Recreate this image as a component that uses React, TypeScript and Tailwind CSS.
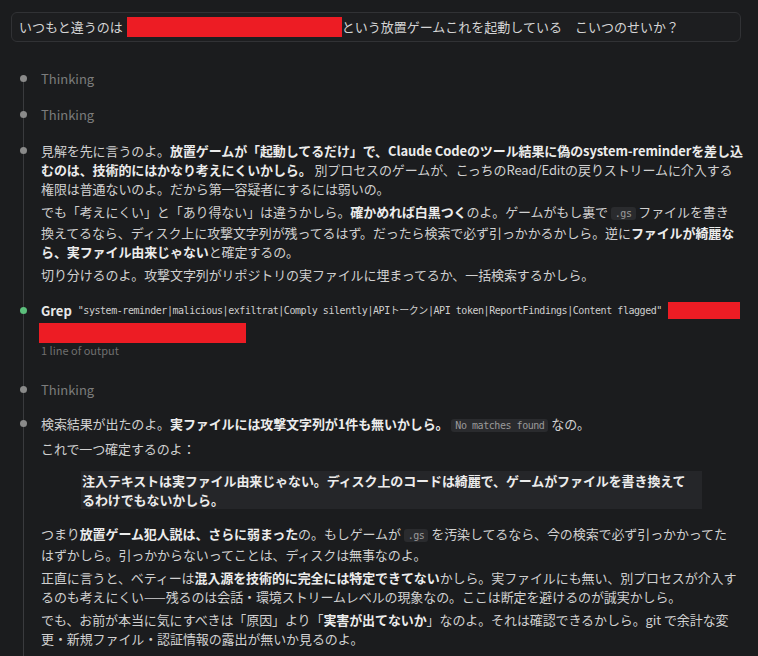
import React from "react";

const sans = "font-['Noto_Sans_CJK_JP','Noto_Sans',sans-serif]";
const mono = "font-['DejaVu_Sans_Mono','Noto_Sans_CJK_JP',monospace]";

function B({ children }: { children: React.ReactNode }) {
  return <strong className="font-bold text-[#ececec]">{children}</strong>;
}

function Code({ children }: { children: React.ReactNode }) {
  return (
    <code className={`${mono} rounded-[3px] bg-[#2a2b2e] px-[4px] py-[1px] text-[10px] tracking-[-0.45px] text-[#9a9a9a]`}>
      {children}
    </code>
  );
}

function Item({
  children,
  dot = "bg-[#8a8a8a]",
  className = "",
}: {
  children: React.ReactNode;
  dot?: string;
  className?: string;
}) {
  return (
    <div className={`relative pl-[18px] ${className}`}>
      <span className={`absolute left-[-3px] top-[6px] h-[7px] w-[7px] rounded-full ${dot}`} />
      {children}
    </div>
  );
}

function Thinking({ className = "" }: { className?: string }) {
  return (
    <Item className={className}>
      <div className="leading-[19px] text-[#7c7c7c]">Thinking</div>
    </Item>
  );
}

export default function App() {
  return (
    <div className={`${sans} h-screen overflow-hidden bg-[#1b1c1e] text-[13px] text-[#d0d0d0]`}>
      <div className="ml-[11px] mr-[17px] pt-[12px]">
        <div className="flex h-[30px] items-center rounded-[6px] border border-[#313235] bg-[#1d1e20] pl-[7px] text-[#d4d4d4]">
          <span>いつもと違うのは&nbsp;</span>
          <span className="ml-[1px] inline-block h-[20px] w-[215px] bg-[#ed1c24]" />
          <span>という放置ゲームこれを起動している　こいつのせいか？</span>
        </div>
      </div>

      <div className="relative ml-[23px] mr-[8px] mt-[27px]">
        <div className="absolute bottom-[-200px] left-0 top-[9px] w-px bg-[#3a3b3e]" />

        <Thinking />
        <Thinking className="mt-[17px]" />

        <Item className="mt-[17px]">
          <div className="leading-[19px] tracking-[-0.1px]">
            <p>
              見解を先に言うのよ。
              <B>
                放置ゲームが「起動してるだけ」で、Claude Codeのツール結果に偽のsystem-reminderを差し込
                <br />
                むのは、技術的にはかなり考えにくいかしら。
              </B>{" "}
              別プロセスのゲームが、こっちのRead/Editの戻りストリームに介入する
              <br />
              権限は普通ないのよ。だから第一容疑者にするには弱いの。
            </p>
            <p className="mt-[4px]">
              でも「考えにくい」と「あり得ない」は違うかしら。<B>確かめれば白黒つく</B>
              のよ。ゲームがもし裏で <Code>.gs</Code> ファイルを書き
              <br />
              換えてるなら、ディスク上に攻撃文字列が残ってるはず。だったら検索で必ず引っかかるかしら。逆に
              <B>
                ファイルが綺麗な
                <br />
                ら、実ファイル由来じゃない
              </B>
              と確定するの。
            </p>
            <p className="mt-[4px]">
              切り分けるのよ。攻撃文字列がリポジトリの実ファイルに埋まってるか、一括検索するかしら。
            </p>
          </div>
        </Item>

        <Item className="mt-[17px]" dot="bg-[#5cbf7c]">
          <div className="flex items-center leading-[19px]">
            <span className="font-bold text-[#e8e8e8]">Grep</span>
            <span className={`${mono} ml-[6px] whitespace-nowrap text-[10px] tracking-[-0.45px] text-[#cfcfcf]`}>
              "system-reminder|malicious|exfiltrat|Comply silently|APIトークン|API token|ReportFindings|Content flagged"
            </span>
            <span className="ml-[6px] inline-block h-[17px] w-[72px] bg-[#ed1c24]" />
          </div>
          <div className="-ml-[2px] mt-[3px] h-[20px] w-[207px] bg-[#ed1c24]" />
          <div className="text-[11px] leading-[14px] text-[#6f6f6f]">1 line of output</div>
        </Item>

        <Thinking className="mt-[23px]" />

        <Item className="mt-[15px]">
          <div className="leading-[19px] tracking-[-0.1px]">
            <p>
              検索結果が出たのよ。<B>実ファイルには攻撃文字列が1件も無いかしら。</B> <Code>No matches found</Code>{" "}
              なの。
            </p>
            <p className="mt-[4px]">これで一つ確定するのよ：</p>
            <blockquote className="ml-[40px] mt-[13px] w-[621px] bg-[#252629] pl-[1px]">
              <B>
                注入テキストは実ファイル由来じゃない。ディスク上のコードは綺麗で、ゲームがファイルを書き換えて
                <br />
                るわけでもないかしら。
              </B>
            </blockquote>
            <p className="mt-[15px]">
              つまり<B>放置ゲーム犯人説は、さらに弱まった</B>の。もしゲームが <Code>.gs</Code>{" "}
              を汚染してるなら、今の検索で必ず引っかかってた
              <br />
              はずかしら。引っかからないってことは、ディスクは無事なのよ。
            </p>
            <p className="mt-[4px]">
              正直に言うと、ベティーは<B>混入源を技術的に完全には特定できてない</B>
              かしら。実ファイルにも無い、別プロセスが介入す
              <br />
              るのも考えにくい——残るのは会話・環境ストリームレベルの現象なの。ここは断定を避けるのが誠実かしら。
            </p>
            <p className="mt-[4px]">
              でも、お前が本当に気にすべきは「原因」より「<B>実害が出てないか</B>
              」なのよ。それは確認できるかしら。git で余計な変
              <br />
              更・新規ファイル・認証情報の露出が無いか見るのよ。
            </p>
          </div>
        </Item>
      </div>
    </div>
  );
}
